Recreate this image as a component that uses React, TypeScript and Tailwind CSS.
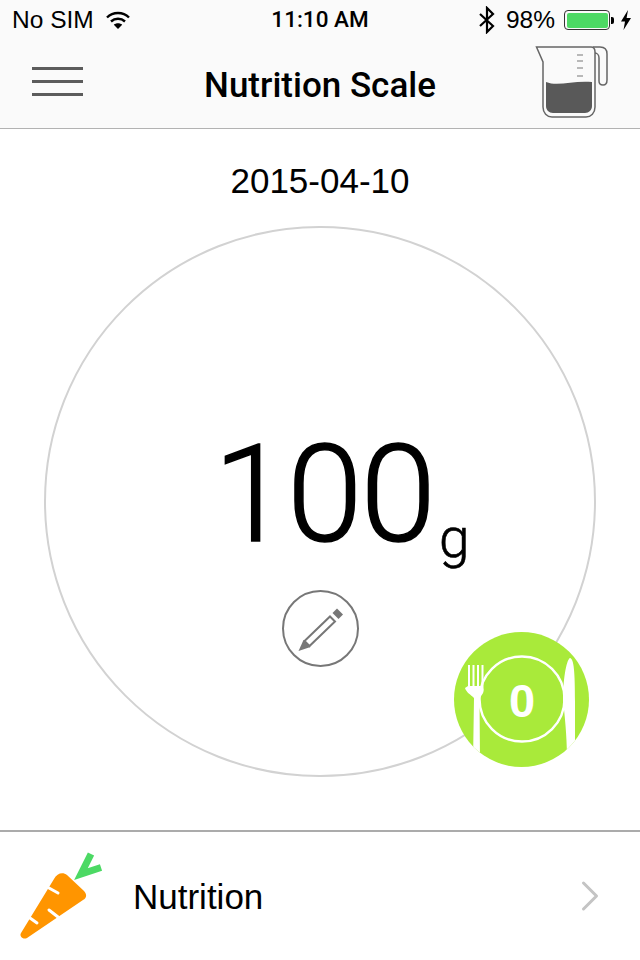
import { ChevronRight } from 'lucide-react';

function WifiIcon() {
  return (
    <svg width="26" height="20" viewBox="0 0 26 20" fill="none" stroke="#000" strokeWidth="2.4">
      <path d="M2 7.5C8 1.5 18 1.5 24 7.5" />
      <path d="M6 11.5C10 7.8 16 7.8 20 11.5" />
      <path d="M13 19L8.8 14.8C11 12.8 15 12.8 17.2 14.8Z" fill="#000" stroke="none" />
    </svg>
  );
}

function BluetoothIcon() {
  return (
    <svg width="20" height="28" viewBox="0 0 20 28" fill="none" stroke="#000" strokeWidth="2.2">
      <path d="M3 8L16 20L10 26V2L16 8L3 20" />
    </svg>
  );
}

function Battery() {
  return (
    <div className="flex items-center">
      <div className="flex h-[20px] w-[46px] rounded-[4px] border border-[#333] p-[1.5px]">
        <div className="w-full rounded-[2px] bg-[#4cd964]" />
      </div>
      <div className="ml-[1px] h-[7px] w-[3px] rounded-r-[2px] bg-black" />
      <svg className="ml-[7px]" width="10" height="20" viewBox="0 0 10 20" fill="#000">
        <path d="M7 0L0 11.5H4L2.5 20L10 8H5.6Z" />
      </svg>
    </div>
  );
}

function JugIcon() {
  return (
    <svg width="78" height="76" viewBox="0 0 78 76" fill="none">
      <path d="M59 3H66C71 3 73 6 73 10V36C73 40 71 41 69 41C67 41 65 40 65 37V14C65 11 63 9 61 9" stroke="#666" strokeWidth="1.5" />
      <path d="M2.5 3H57C60 3 61 5 61 8V63C61 69 57 73 52 73H18C13 73 9 69 9 63V18Z" stroke="#666" strokeWidth="1.5" fill="#fafafa" />
      <path d="M12 38C24 43 40 36 58 38V62C58 66 55 69 51 69H19C15 69 12 66 12 62Z" fill="#595959" />
      <path d="M43 11H49M43 17H49M43 24H49M43 32H49" stroke="#777" strokeWidth="1.2" />
    </svg>
  );
}

function PencilIcon() {
  return (
    <svg width="50" height="50" viewBox="0 0 50 50" fill="none">
      <path d="M37.5 9L42 4.5L48 10.5L43.5 15Z" fill="#777" />
      <path d="M35 12.5L40 17.5L14.5 42L9.5 37Z" stroke="#777" strokeWidth="2" />
      <path d="M8.5 36L15.5 43L3.5 47Z" fill="#777" />
    </svg>
  );
}

function PlateBadge() {
  return (
    <div className="absolute left-[454px] top-[503px] flex h-[135px] w-[135px] items-center justify-center overflow-hidden rounded-full bg-[#a9ea3a]">
      <svg className="absolute inset-0" width="135" height="135" viewBox="0 0 135 135" fill="none">
        <circle cx="68" cy="67" r="42.5" stroke="#fff" strokeWidth="2.4" />
        <path d="M14 33H16V54H18.5V33H20.5V54H23V33H25V54H27.5V33H29.5V56C30.5 60 28 63 25.5 66L26 130H19L20 66C17 63 12 60 11 56L14 54Z" fill="#fff" />
        <path d="M113 130C113 110 112 95 109 68C109 50 112 28 116 26C120 27 121 40 121 70V130Z" fill="#fff" />
      </svg>
      <span className="relative ml-[1px] mt-[2px] font-['Liberation_Sans',sans-serif] text-[47px] font-bold leading-none text-white">0</span>
    </div>
  );
}

function CarrotIcon() {
  return (
    <svg width="96" height="96" viewBox="0 0 96 96" fill="none">
      <path d="M79 6L69 26L89 19.5" stroke="#4cd964" strokeWidth="7" />
      <path d="M42 31C45 25 51 24 55 27L72 43C75 46 75 50 71 52L15 90C11 92 7 88 9 85Z" fill="#ff9500" />
      <path d="M37 40L46 45M46 69L37 62M18 70L25 75" stroke="#fff" strokeWidth="3" strokeLinecap="round" />
    </svg>
  );
}

export default function App() {
  return (
    <div className="flex h-[960px] w-[640px] flex-col overflow-hidden bg-white font-['Liberation_Sans',sans-serif] text-black">
      <header className="h-[129px] border-b border-[#b2b2b2] bg-[#fafafa]">
        <div className="relative flex h-[40px] items-center justify-between pl-[12px] pr-[9px] text-[24.5px]">
          <div className="flex items-center gap-[11px]">
            <span>No SIM</span>
            <WifiIcon />
          </div>
          <span className="absolute left-0 right-0 text-center font-['Roboto',sans-serif] text-[22.5px] font-medium">11:10 AM</span>
          <div className="flex items-center gap-[9px]">
            <BluetoothIcon />
            <span>98%</span>
            <Battery />
          </div>
        </div>
        <div className="grid h-[88px] grid-cols-[1fr_auto_1fr] items-center">
          <div className="mb-[5px] flex w-[83px] flex-col gap-[10px] pl-[32px]">
            <div className="h-[3px] bg-[#5c5c5c]" />
            <div className="h-[3px] bg-[#5c5c5c]" />
            <div className="h-[3px] bg-[#5c5c5c]" />
          </div>
          <h1 className="mt-[2px] font-['Roboto',sans-serif] text-[35px] font-medium leading-none">Nutrition Scale</h1>
          <div className="mt-[-4px] justify-self-end pr-[28px]">
            <JugIcon />
          </div>
        </div>
      </header>

      <main className="relative flex h-[703px] flex-col items-center border-b-2 border-[#ababab]">
        <p className="mt-[32px] text-[35px] leading-[40px]">2015-04-10</p>
        <div className="mt-[25px] flex h-[551px] w-[552px] flex-col items-center rounded-full border-2 border-[#d2d2d2]">
          <div className="mt-[202px] flex items-end pl-[43px]">
            <span className="font-['Roboto',sans-serif] text-[136px] font-light leading-[130px] tracking-[-2px] [-webkit-text-stroke:1.5px_black]">100</span>
            <span className="mb-[-8px] ml-[5px] font-['Roboto',sans-serif] text-[55px] font-light leading-[60px] [-webkit-text-stroke:0.6px_black]">g</span>
          </div>
          <div className="mt-[30px] flex h-[77px] w-[77px] items-center justify-center rounded-full border-2 border-[#777]">
            <PencilIcon />
          </div>
        </div>
        <PlateBadge />
      </main>

      <section className="flex h-[128px] items-center justify-between pl-[12px] pr-[24px]">
        <div className="flex items-center gap-[25px]">
          <CarrotIcon />
          <span className="mt-[2px] text-[35px]">Nutrition</span>
        </div>
        <ChevronRight size={52} strokeWidth={1.4} color="#c4c4c4" />
      </section>
    </div>
  );
}
